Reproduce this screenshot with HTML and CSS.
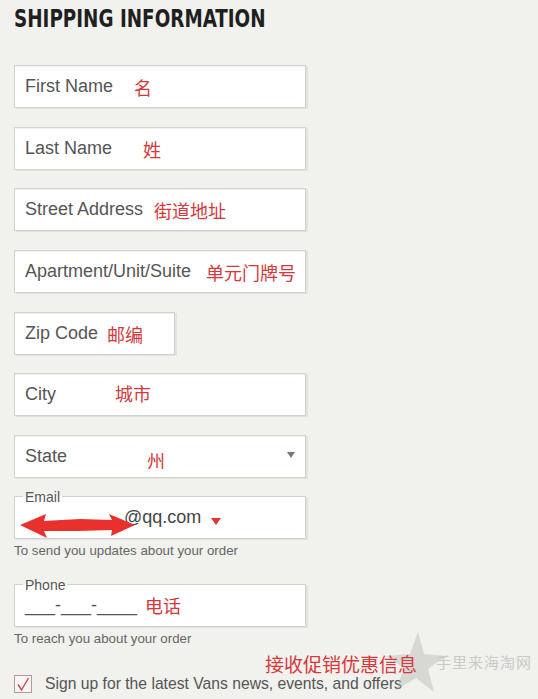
FILE: index.html
```html
<!DOCTYPE html>
<html lang="en">
<head>
<meta charset="utf-8">
<title>Shipping Information</title>
<link rel="stylesheet" href="styles.css">
</head>
<body>
<main class="page">
  <h1 class="title">SHIPPING INFORMATION</h1>

  <div class="field"><span class="label">First Name</span><span class="note note-first">名</span></div>
  <div class="field"><span class="label">Last Name</span><span class="note note-last">姓</span></div>
  <div class="field"><span class="label">Street Address</span><span class="note note-street">街道地址</span></div>
  <div class="field"><span class="label">Apartment/Unit/Suite</span><span class="note note-apt">单元门牌号</span></div>
  <div class="field field-zip"><span class="label">Zip Code</span><span class="note note-zip">邮编</span></div>
  <div class="field"><span class="label">City</span><span class="note note-city">城市</span></div>
  <div class="field field-last"><span class="label">State</span><span class="note note-state">州</span><span class="select-arrow"></span></div>

  <fieldset class="fs">
    <legend class="legend">Email</legend>
    <div class="fs-row"><span class="value value-email">@qq.com</span><span class="red-tri"></span></div>
    <svg class="redarrow" width="116" height="26" viewBox="0 0 116 26">
      <polygon points="0,12 26,1 24,8 60,6 92,7 89,1 115,12 91,23 92,17 58,18 24,18 27,25" fill="#e8302c"/>
    </svg>
  </fieldset>
  <p class="hint">To send you updates about your order</p>

  <fieldset class="fs fs-phone">
    <legend class="legend">Phone</legend>
    <div class="fs-row"><span class="value">___-___-____</span><span class="note note-phone">电话</span></div>
  </fieldset>
  <p class="hint">To reach you about your order</p>

  <div class="check-row">
    <span class="checkbox">
      <svg width="16" height="16" viewBox="0 0 16 16"><path d="M3 8.5 L6.5 14 L13.5 2" fill="none" stroke="#d04848" stroke-width="1.4"/></svg>
    </span>
    <span class="check-text">Sign up for the latest Vans news, events, and offers</span>
  </div>
</main>

<svg class="star" width="64" height="64" viewBox="0 0 64 64">
  <polygon points="34,2 40,24 62,26 44,39 50,62 32,48 12,60 20,38 2,26 26,24" fill="#b9b9b6" opacity="0.45"/>
</svg>
<span class="promo">接收促销优惠信息</span>
<span class="watermark">手里来海淘网</span>
</body>
</html>
```

FILE: styles.css
```css
html, body {
  margin: 0;
  padding: 0;
}

body {
  background: #f1f1ed;
  font-family: "Liberation Sans", Arial, sans-serif;
  color: #555;
  position: relative;
  height: 699px;
  overflow: hidden;
}

.page {
  padding: 5px 0 0 14px;
  width: 292px;
}

.title {
  margin: 0 0 32px 0;
  font-family: "DejaVu Sans Condensed", "Liberation Sans", sans-serif;
  font-weight: bold;
  font-size: 24px;
  line-height: 28px;
  color: #1f1f1f;
  white-space: nowrap;
  transform: scaleX(0.85);
  transform-origin: left center;
}

.field {
  box-sizing: border-box;
  height: 43px;
  width: 292px;
  background: #fff;
  border: 1px solid #d2d2d0;
  box-shadow: inset 0 1px 1px rgba(0,0,0,0.06), 2px 1px 0 #e2e2de;
  display: flex;
  align-items: center;
  padding-left: 10px;
  margin-bottom: 18.67px;
}

.field-zip {
  width: 161px;
}

.field-last {
  margin-bottom: 11px;
}

.label {
  font-size: 18px;
  color: #555;
  white-space: nowrap;
}

.note {
  font-family: "Noto Sans CJK SC", sans-serif;
  font-size: 18px;
  line-height: 22px;
  color: #d3383b;
  white-space: nowrap;
}

.note-first { margin-left: 21px; }
.note-last { margin-left: 31px; margin-top: 2px; }
.note-street { margin-left: 11px; }
.note-apt { margin-left: 15px; margin-top: 2px; }
.note-zip { margin-left: 9px; margin-top: 2px; }
.note-city { margin-left: 59px; margin-top: -4px; }
.note-state { margin-left: 80px; margin-top: 8px; }
.note-phone { margin-left: 8px; margin-top: -2px; }

.select-arrow {
  margin-left: auto;
  margin-right: 10px;
  margin-top: -3px;
  width: 0;
  height: 0;
  border-left: 4px solid transparent;
  border-right: 4px solid transparent;
  border-top: 6px solid #777;
}

.fs {
  position: relative;
  margin: 0;
  padding: 0 8px 7px 8px;
  width: 292px;
  box-sizing: border-box;
  min-width: 0;
  border: 1px solid #d2d2d0;
  background: #fff;
  box-shadow: 2px 1px 0 #e2e2de;
}

.legend {
  padding: 0 2px;
  font-size: 14px;
  line-height: 16px;
  color: #555;
  background: transparent;
}

.fs-row {
  height: 26px;
  display: flex;
  align-items: center;
  padding-left: 2px;
}

.value {
  font-size: 18px;
  color: #555;
  white-space: nowrap;
}

.value-email {
  margin-left: 99px;
  color: #444;
}

.red-tri {
  margin-left: 10px;
  margin-top: 8px;
  width: 0;
  height: 0;
  border-left: 5px solid transparent;
  border-right: 5px solid transparent;
  border-top: 7px solid #e03535;
}

.redarrow {
  position: absolute;
  left: 5px;
  top: 8px;
}

.hint {
  margin: 4px 0 19px 0;
  font-size: 13.3px;
  line-height: 15px;
  color: #666;
  white-space: nowrap;
}

.fs-phone + .hint {
  margin-bottom: 29px;
}

.check-row {
  display: flex;
  align-items: center;
  height: 18px;
}

.checkbox {
  box-sizing: border-box;
  width: 18px;
  height: 18px;
  border: 1px solid #b09a9c;
  background: #f7f5f5;
  display: flex;
  align-items: center;
  justify-content: center;
}

.check-text {
  margin-left: 13px;
  font-size: 15.7px;
  color: #555;
  white-space: nowrap;
}

.star {
  position: absolute;
  left: 384px;
  top: 630px;
}

.promo {
  position: absolute;
  left: 265px;
  top: 652px;
  font-family: "Noto Sans CJK SC", sans-serif;
  font-size: 19px;
  line-height: 24px;
  color: #d63a3d;
  white-space: nowrap;
}

.watermark {
  position: absolute;
  left: 436px;
  top: 652px;
  font-family: "Noto Sans CJK SC", serif;
  font-size: 15px;
  line-height: 20px;
  letter-spacing: 1px;
  color: #cacac6;
  white-space: nowrap;
}
```
